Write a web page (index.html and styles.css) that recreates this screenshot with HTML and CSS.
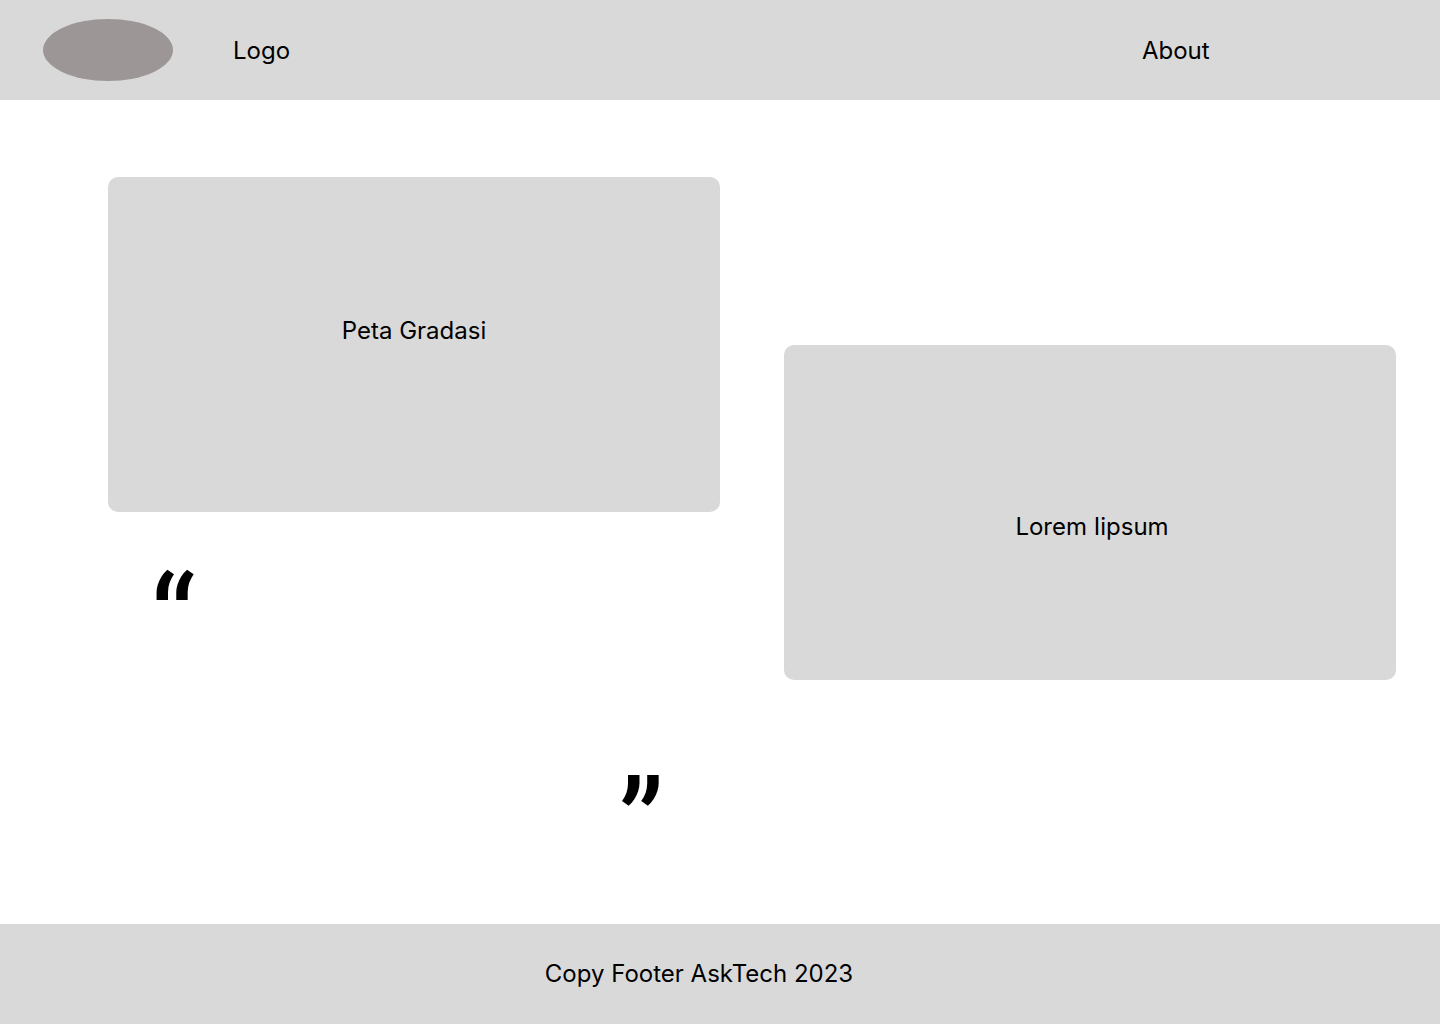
FILE: index.html
```html
<!DOCTYPE html>
<html lang="id">
<head>
<meta charset="utf-8">
<meta name="viewport" content="width=device-width, initial-scale=1">
<title>AskTech</title>
<link rel="stylesheet" href="styles.css">
</head>
<body>
<header class="site-header">
  <div class="brand">
    <span class="brand-mark"></span>
    <span class="brand-name">Logo</span>
  </div>
  <nav><a class="nav-link" href="#about">About</a></nav>
</header>
<main class="content">
  <div class="column">
    <section class="card">Peta Gradasi</section>
    <div class="quote">
      <span class="quote-mark">“</span>
      <span class="quote-mark quote-close">”</span>
    </div>
  </div>
  <div class="column column-lower">
    <section class="card card-text">Lorem Iipsum</section>
  </div>
</main>
<footer class="site-footer">Copy Footer AskTech 2023</footer>
</body>
</html>
```

FILE: styles.css
```css
* {
  box-sizing: border-box;
}

body {
  display: flex;
  flex-direction: column;
  min-height: 100vh;
  margin: 0;
  background: #fff;
  color: #000;
  font-family: Inter, sans-serif;
  font-size: 24px;
  line-height: 30px;
}

.site-header {
  display: flex;
  align-items: center;
  justify-content: space-between;
  min-height: 100px;
  padding: 0 16% 0 43px;
  background: #d9d9d9;
}

.brand {
  display: flex;
  align-items: center;
  gap: 60px;
}

.brand-mark {
  width: 130px;
  height: 62px;
  border-radius: 50%;
  background: #9d9696;
}

.brand-name,
.nav-link {
  display: block;
  padding-top: 2px;
}

.nav-link {
  color: inherit;
  text-decoration: none;
}

.content {
  display: grid;
  flex: 1;
  grid-template-columns: 1fr 1fr;
  gap: 64px;
  padding: 77px 44px 32px 108px;
}

.column-lower {
  padding-top: 168px;
}

.card {
  display: flex;
  align-items: center;
  justify-content: center;
  min-height: 335px;
  padding-bottom: 28px;
  border-radius: 10px;
  background: #d9d9d9;
}

.card-text {
  padding: 28px 0 0 4px;
}

.quote {
  display: flex;
  flex-direction: column;
  gap: 84px;
  padding: 51px 56px 0 42px;
}

.quote-mark {
  font-family: Roboto, sans-serif;
  font-size: 128px;
  line-height: 120px;
}

.quote-close {
  align-self: flex-end;
}

.site-footer {
  display: flex;
  align-items: center;
  justify-content: center;
  min-height: 100px;
  padding-right: 42px;
  background: #d9d9d9;
}
```
